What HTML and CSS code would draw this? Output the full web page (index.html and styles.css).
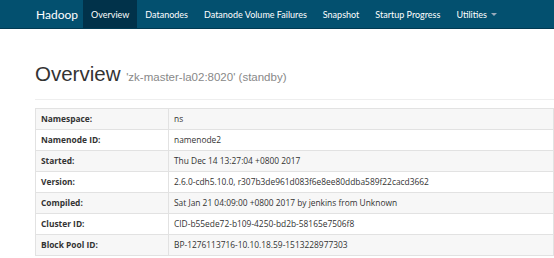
FILE: index.html
```html
<!DOCTYPE html>
<html>
<head>
    <title>Namenode information</title>
    <link rel="stylesheet" href="styles.css">
</head>
<body>
    <nav class="navbar">
        <span class="brand">Hadoop</span>
        <ul class="nav">
            <li class="active">Overview</li>
            <li>Datanodes</li>
            <li>Datanode Volume Failures</li>
            <li>Snapshot</li>
            <li>Startup Progress</li>
            <li>Utilities <span class="caret"></span></li>
        </ul>
    </nav>

    <div class="container">
        <div class="page-header">
            <h1>Overview <small>'zk-master-la02:8020' (standby)</small></h1>
        </div>

        <table class="info">
            <tr><th>Namespace:</th><td>ns</td></tr>
            <tr><th>Namenode ID:</th><td>namenode2</td></tr>
            <tr><th>Started:</th><td>Thu Dec 14 13:27:04 +0800 2017</td></tr>
            <tr><th>Version:</th><td>2.6.0-cdh5.10.0, r307b3de961d083f6e8ee80ddba589f22cacd3662</td></tr>
            <tr><th>Compiled:</th><td>Sat Jan 21 04:09:00 +0800 2017 by jenkins from Unknown</td></tr>
            <tr><th>Cluster ID:</th><td>CID-b55ede72-b109-4250-bd2b-58165e7506f8</td></tr>
            <tr><th>Block Pool ID:</th><td>BP-1276113716-10.10.18.59-1513228977303</td></tr>
        </table>
    </div>
</body>
</html>
```

FILE: styles.css
```css
body {
    margin: 0;
    padding: 0;
    background-color: #fff;
    color: #333;
    font-family: 'Open Sans', sans-serif;
    overflow: hidden;
}
.navbar {
    display: flex;
    align-items: stretch;
    height: 28px;
    background-color: #03506f;
    border-bottom: 1px solid #013a52;
    padding-left: 36px;
}
.brand {
    display: flex;
    align-items: center;
    color: #fff;
    font-family: 'Lato', sans-serif;
    font-size: 12px;
    margin-right: 5px;
}
.nav {
    display: flex;
    list-style: none;
    margin: 0;
    padding: 0;
}
.nav li {
    display: flex;
    align-items: center;
    padding: 0 8px;
    color: #fff;
    font-family: 'Lato', sans-serif;
    font-size: 9px;
    white-space: nowrap;
}
.nav li.active {
    background-color: #01324a;
}
.caret {
    display: inline-block;
    width: 0;
    height: 0;
    margin-left: 4px;
    border-top: 3px solid #9ab;
    border-left: 3px solid transparent;
    border-right: 3px solid transparent;
}
.container {
    padding: 0 0 0 35px;
}
.page-header {
    border-bottom: 1px solid #eee;
    padding: 33px 0 10px;
    margin-bottom: 8px;
}
h1 {
    margin: 0;
    font-family: 'Liberation Sans', Arial, sans-serif;
    font-weight: normal;
    font-size: 20.5px;
    line-height: 24px;
    color: #333;
}
h1 small {
    font-size: 11.5px;
    color: #888;
}
.info {
    width: 100%;
    border-collapse: collapse;
    font-size: 8.4px;
}
.info th, .info td {
    height: 20px;
    line-height: 20px;
    padding: 0 5px;
    border: 1px solid #e2e2e2;
    text-align: left;
    white-space: nowrap;
}
.info th {
    width: 122px;
    font-weight: bold;
}
.info tr:nth-child(odd) {
    background-color: #f7f7f7;
}
```
